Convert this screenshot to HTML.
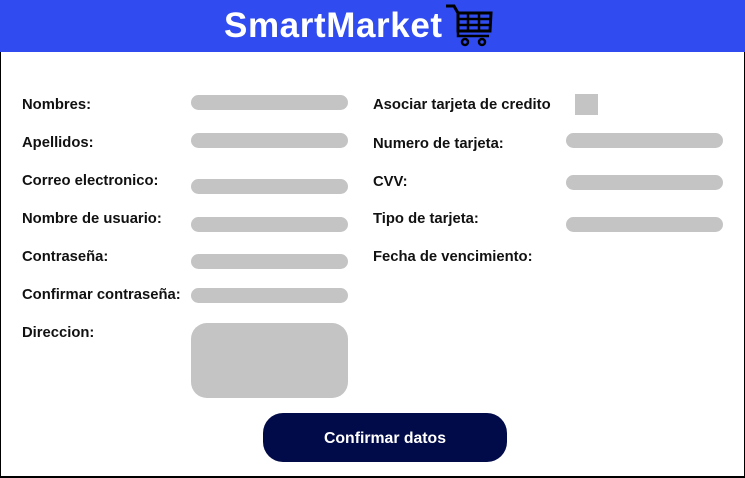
<!DOCTYPE html>
<html><head><meta charset="utf-8"><style>
*{margin:0;padding:0;box-sizing:border-box}
body{width:745px;height:478px;background:#fff;position:relative;overflow:hidden;font-family:"Liberation Sans",sans-serif}
.hdr{position:absolute;left:0;top:0;width:745px;height:52px;background:#304cf0}
.logo{position:absolute;left:224px;top:6px;color:#fff;font-size:35px;font-weight:bold;letter-spacing:0.6px;line-height:40px}
.frame{position:absolute;left:0;top:52px;width:745px;height:426px;border:1px solid #000;border-top:none;border-bottom:2px solid #000}
.l{position:absolute;font-size:14.8px;font-weight:bold;color:#111;line-height:16px}
.i{position:absolute;background:#c4c4c4;height:15px;border-radius:8px;width:157px}
.btn{position:absolute;left:263px;top:413px;width:244px;height:49px;background:#020b49;border-radius:20px;color:#fff;font-weight:bold;font-size:15.8px;text-align:center;line-height:52px}
</style></head><body>
<div class="hdr"><div class="logo">SmartMarket</div>
<svg style="position:absolute;left:444px;top:3px" width="50" height="45" viewBox="444 3 50 45">
<path d="M446 6H454L458 13V31H490L491 13H458" fill="none" stroke="#000" stroke-width="3"/>
<path d="M458 19H490M458 25H490M468 13V31M479 13V31" stroke="#000" stroke-width="2.5"/>
<path d="M458 31V36H489" fill="none" stroke="#000" stroke-width="2.5"/>
<circle cx="465" cy="42" r="3" fill="none" stroke="#000" stroke-width="2.5"/>
<circle cx="482" cy="42" r="3" fill="none" stroke="#000" stroke-width="2.5"/>
</svg></div>
<div class="frame"></div>
<div class="l" style="left:22px;top:97px">Nombres:</div>
<div class="l" style="left:22px;top:135px">Apellidos:</div>
<div class="l" style="left:22px;top:173px">Correo electronico:</div>
<div class="l" style="left:22px;top:211px">Nombre de usuario:</div>
<div class="l" style="left:22px;top:249px">Contraseña:</div>
<div class="l" style="left:22px;top:287px">Confirmar contraseña:</div>
<div class="l" style="left:22px;top:325px">Direccion:</div>
<div class="i" style="left:191px;top:95px"></div>
<div class="i" style="left:191px;top:133px"></div>
<div class="i" style="left:191px;top:179px"></div>
<div class="i" style="left:191px;top:217px"></div>
<div class="i" style="left:191px;top:254px"></div>
<div class="i" style="left:191px;top:288px"></div>
<div class="i" style="left:191px;top:323px;height:75px;border-radius:16px"></div>
<div class="l" style="left:373px;top:97px">Asociar tarjeta de credito</div>
<div class="l" style="left:373px;top:136px">Numero de tarjeta:</div>
<div class="l" style="left:373px;top:174px">CVV:</div>
<div class="l" style="left:373px;top:211px">Tipo de tarjeta:</div>
<div class="l" style="left:373px;top:249px">Fecha de vencimiento:</div>
<div style="position:absolute;left:575px;top:94px;width:23px;height:21px;background:#c4c4c4"></div>
<div class="i" style="left:566px;top:133px"></div>
<div class="i" style="left:566px;top:175px"></div>
<div class="i" style="left:566px;top:217px"></div>
<div class="btn">Confirmar datos</div>
</body></html>
